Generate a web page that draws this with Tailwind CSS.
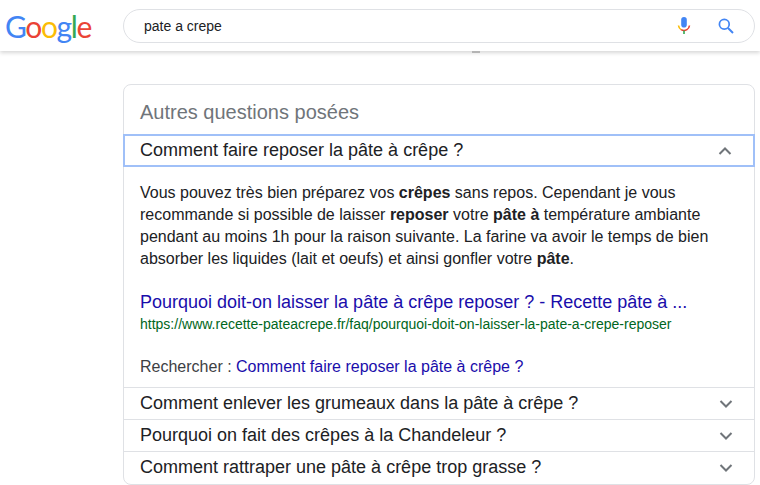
<!DOCTYPE html>
<html lang="fr">
<head>
  <meta charset="UTF-8" />
  <title>pate a crepe</title>
  <script src="https://cdn.jsdelivr.net/npm/@tailwindcss/browser@4"></script>
</head>
<body class="bg-white font-['Liberation_Sans',Arial,sans-serif] overflow-hidden h-[485px]">
  <!-- Header -->
  <header class="h-[51px] flex items-start bg-white shadow-[0_2px_4px_rgba(0,0,0,0.16)]">
    <div class="w-[123px] pl-[5px] pt-[4px] h-[44px] text-[30px] leading-[44px] tracking-[-1.4px] font-['Lato',sans-serif]">
      <span class="text-[#4285f4]">G</span><span class="text-[#ea4335]">o</span><span class="text-[#fbbc05]">o</span><span class="text-[#4285f4]">g</span><span class="text-[#34a853]">l</span><span class="text-[#ea4335]">e</span>
    </div>
    <div class="mt-[9px] w-[632px] h-[34px] flex items-center rounded-full border border-[#dfe1e5] pl-[20px] pr-[20px]">
      <span class="flex-1 text-[14px] text-[#202124]">pate a crepe</span>
      <svg class="w-[16px] h-[20px] mr-[26px]" viewBox="0 0 16 20">
        <rect x="5.2" y="1" width="5.6" height="10.5" rx="2.8" fill="#4285f4"/>
        <path d="M2.5 9.5a5.5 5.5 0 0 0 2.6 4.1" fill="none" stroke="#fbbc05" stroke-width="1.6"/>
        <path d="M5.1 13.6a5.5 5.5 0 0 0 5.8 0 5.5 5.5 0 0 0 2.6-4.1" fill="none" stroke="#ea4335" stroke-width="1.6"/>
        <rect x="7.2" y="14.5" width="1.6" height="3.5" fill="#34a853"/>
      </svg>
      <svg class="w-[16px] h-[16px]" viewBox="0 0 16 16" fill="none" stroke="#4285f4">
        <circle cx="6.3" cy="6.3" r="4.9" stroke-width="1.7"/>
        <path d="M10 10l5 5" stroke-width="1.9"/>
      </svg>
    </div>
  </header>
  <!-- bit of the scrolled page showing under the header -->
  <div class="absolute left-[472px] top-[51px] w-[8px] h-[2px] bg-[#b4b4b4]"></div>

  <!-- Autres questions -->
  <main class="pl-[123px] pt-[33px]">
    <section class="w-[632px] h-[401px] rounded-[8px] border border-[#dfe1e5] bg-white">
      <h2 class="h-[49px] pl-[16px] pt-[15px] text-[20px] leading-[24px] text-[#70757a]">Autres questions posées</h2>

      <div class="-mx-px h-[33px] flex items-center justify-between border-2 border-[#a0c0f8] pl-[15px] pr-[21px] text-[18px] text-[#202124]">
        <span>Comment faire reposer la pâte à crêpe ?</span>
        <svg class="w-[14px] h-[10px]" viewBox="0 0 14 10"><path d="M1.5 8l5.5-5.5L12.5 8" fill="none" stroke="#70757a" stroke-width="2"/></svg>
      </div>

      <div class="pl-[16px] pr-[21px] pt-[15px]">
        <p class="text-[16px] leading-[22px] text-[#202124]">Vous pouvez très bien préparez vos <b>crêpes</b> sans repos. Cependant je vous<br>recommande si possible de laisser <b>reposer</b> votre <b>pâte à</b> température ambiante<br>pendant au moins 1h pour la raison suivante. La farine va avoir le temps de bien<br>absorber les liquides (lait et oeufs) et ainsi gonfler votre <b>pâte</b>.</p>
        <a class="block mt-[20px] text-[18px] leading-[24px] text-[#1a0dab] whitespace-nowrap" href="#">Pourquoi doit-on laisser la pâte à crêpe reposer ? - Recette pâte à ...</a>
        <div class="mt-[2px] text-[14px] leading-[16px] text-[#006621] whitespace-nowrap">https://www.recette-pateacrepe.fr/faq/pourquoi-doit-on-laisser-la-pate-a-crepe-reposer</div>
        <p class="mt-[25px] text-[16px] leading-[20px] text-[#3c4043]">Rechercher : <a class="text-[#1a0dab]" href="#">Comment faire reposer la pâte à crêpe ?</a></p>
      </div>

      <div class="mt-[10px] border-t border-[#dfe1e5]">
        <div class="h-[31px] flex items-center justify-between pl-[16px] pr-[21px] text-[18px] text-[#202124]">
          <span>Comment enlever les grumeaux dans la pâte à crêpe ?</span>
          <svg class="w-[14px] h-[10px]" viewBox="0 0 14 10"><path d="M1.5 2l5.5 5.5L12.5 2" fill="none" stroke="#70757a" stroke-width="2"/></svg>
        </div>
        <div class="h-[32px] flex items-center justify-between border-t border-[#dfe1e5] pl-[16px] pr-[21px] text-[18px] text-[#202124]">
          <span>Pourquoi on fait des crêpes à la Chandeleur ?</span>
          <svg class="w-[14px] h-[10px]" viewBox="0 0 14 10"><path d="M1.5 2l5.5 5.5L12.5 2" fill="none" stroke="#70757a" stroke-width="2"/></svg>
        </div>
        <div class="h-[32px] flex items-center justify-between border-t border-[#dfe1e5] pl-[16px] pr-[21px] text-[18px] text-[#202124]">
          <span>Comment rattraper une pâte à crêpe trop grasse ?</span>
          <svg class="w-[14px] h-[10px]" viewBox="0 0 14 10"><path d="M1.5 2l5.5 5.5L12.5 2" fill="none" stroke="#70757a" stroke-width="2"/></svg>
        </div>
      </div>
    </section>
  </main>
</body>
</html>
